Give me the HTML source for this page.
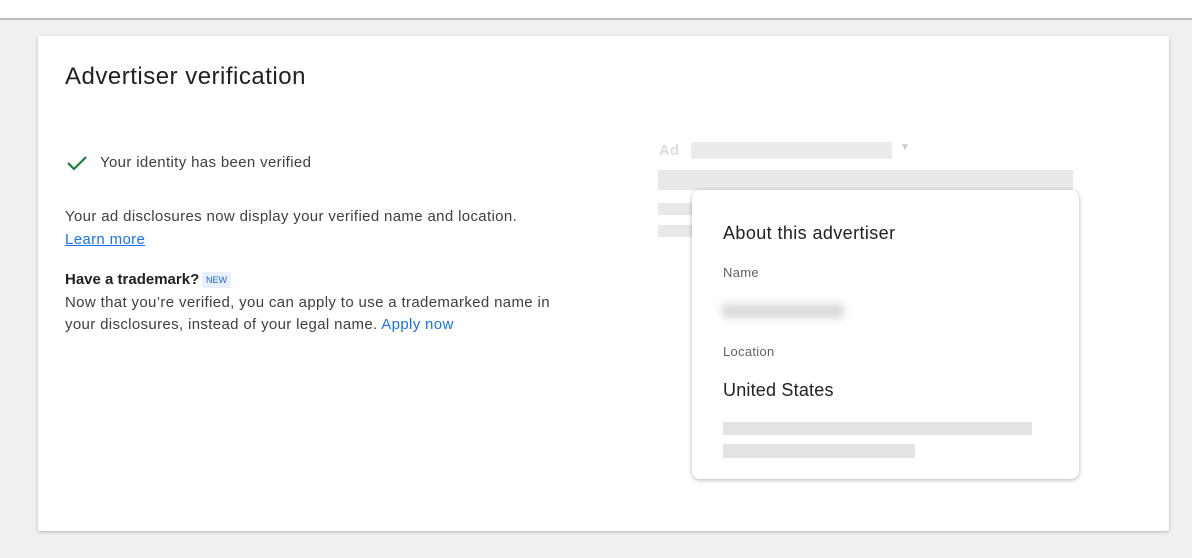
<!DOCTYPE html>
<html><head><style>
body{margin:0;width:1192px;height:558px;background:#eff0f1;font-family:"Liberation Sans",Arial,sans-serif;position:relative;overflow:hidden}
.top{position:absolute;left:0;top:0;width:1192px;height:18px;background:#fff;border-bottom:2px solid #bdbdbd}
.card{position:absolute;left:38px;top:36px;width:1131px;height:495px;background:#fff;box-shadow:0 1px 3px rgba(0,0,0,.25)}
.a{position:absolute;white-space:nowrap;color:#202124}
.t{letter-spacing:0.35px}
.g{position:absolute;background:#e3e3e3}
.pop{position:absolute;left:692px;top:190px;width:387px;height:289px;background:#fff;border-radius:8px;box-shadow:0 1px 4px rgba(0,0,0,.3)}
</style></head><body>
<div class="top"></div>
<div class="card"></div>
<div class="a" style="left:65px;top:63px;font-size:24px;letter-spacing:0.5px">Advertiser verification</div>
<svg style="position:absolute;left:66px;top:154px" width="22" height="18" viewBox="0 0 22 18"><path d="M2 9l6 6L20 3" fill="none" stroke="#188038" stroke-width="2.2"/></svg>
<div class="a t" style="left:100px;top:154px;font-size:15px;color:#3c4043">Your identity has been verified</div>
<div class="a t" style="left:65px;top:208px;font-size:15px;color:#3c4043">Your ad disclosures now display your verified name and location.</div>
<div class="a t" style="left:65px;top:231px;font-size:15px;color:#1a73e8;text-decoration:underline">Learn more</div>
<div class="a" style="left:65px;top:271px;font-size:15px;font-weight:bold">Have a trademark?</div>
<div class="a" style="left:202px;top:272px;font-size:9px;color:#1967d2;background:#e8f0fe;padding:3px 4px;border-radius:2px">NEW</div>
<div class="a t" style="left:65px;top:292px;font-size:15px;color:#3c4043;line-height:22px">Now that you’re verified, you can apply to use a trademarked name in<br>your disclosures, instead of your legal name. <span style="color:#1a73e8">Apply now</span></div>
<div class="a" style="left:659px;top:142px;font-size:15px;font-weight:bold;color:#ddd">Ad</div>
<div class="g" style="left:691px;top:142px;width:201px;height:17px;background:#ebebeb"></div>
<div class="a" style="left:900px;top:142px;font-size:10px;color:#ccc">▼</div>
<div class="g" style="left:658px;top:170px;width:415px;height:20px;background:#e8e8e8"></div>
<div class="g" style="left:658px;top:203px;width:40px;height:12px;background:#e8e8e8"></div>
<div class="g" style="left:658px;top:225px;width:40px;height:12px;background:#e8e8e8"></div>
<div class="pop"></div>
<div class="a" style="left:723px;top:223px;font-size:18px;letter-spacing:0.4px">About this advertiser</div>
<div class="a" style="left:723px;top:265px;font-size:13px;color:#5f6368;letter-spacing:0.3px">Name</div>
<div class="g" style="left:722px;top:304px;width:122px;height:14px;background:#d9d9d9;filter:blur(4px)"></div>
<div class="a" style="left:723px;top:344px;font-size:13px;color:#5f6368;letter-spacing:0.3px">Location</div>
<div class="a" style="left:723px;top:380px;font-size:18px;letter-spacing:0.2px">United States</div>
<div class="g" style="left:723px;top:422px;width:309px;height:13px"></div>
<div class="g" style="left:723px;top:444px;width:192px;height:14px"></div>
</body></html>
